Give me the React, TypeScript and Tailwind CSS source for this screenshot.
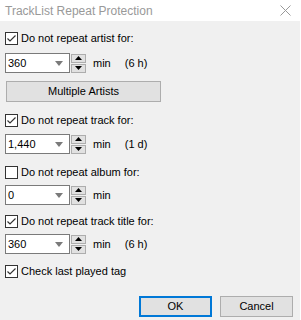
import React from "react";

const font = { fontFamily: '"Liberation Sans", Arial, sans-serif' };

function Check({ checked, label, mt }: { checked: boolean; label: string; mt: string }) {
  return (
    <div className={`flex items-center h-[13px] ${mt}`}>
      <div className="w-[13px] h-[13px] border border-[#333333] bg-white flex items-center justify-center shrink-0">
        {checked && (
          <svg width="11" height="11" viewBox="0 0 11 11">
            <polyline points="1.5,5.5 4,8 9.5,2.5" fill="none" stroke="#333333" strokeWidth="1.2" />
          </svg>
        )}
      </div>
      <span className="ml-[3px] text-[11px] text-black leading-none">{label}</span>
    </div>
  );
}

function Tri({ up, color }: { up?: boolean; color: string }) {
  return (
    <svg width="7" height="4" viewBox="0 0 7 4">
      <polygon points={up ? "0,4 7,4 3.5,0" : "0,0 7,0 3.5,4"} fill={color} />
    </svg>
  );
}

function Combo({ value, extra, mt }: { value: string; extra?: string; mt: string }) {
  return (
    <div className={`flex items-center ${mt}`}>
      <div className="w-[65px] h-[20px] border border-[#7a7a7a] bg-white flex items-center justify-between pl-[2px] pr-[6px]">
        <span className="text-[11px] text-black leading-none">{value}</span>
        <svg width="8" height="5" viewBox="0 0 8 5">
          <polygon points="0,0 8,0 4,5" fill="#7a7a7a" />
        </svg>
      </div>
      <div className="ml-[1px] flex flex-col gap-[1px]">
        <div className="w-[15px] h-[9px] bg-[#e1e1e1] border border-[#adadad] flex items-center justify-center">
          <Tri up color="#000" />
        </div>
        <div className="w-[15px] h-[9px] bg-[#e1e1e1] border border-[#adadad] flex items-center justify-center">
          <Tri color="#000" />
        </div>
      </div>
      <span className="ml-[7px] text-[11px] text-black leading-none">min</span>
      {extra && <span className="ml-[14px] text-[11px] text-black leading-none">{extra}</span>}
    </div>
  );
}

export default function App() {
  return (
    <div className="w-[301px] h-[320px] bg-[#f0f0f0] flex flex-col border-r border-white" style={font}>
      <div className="h-[21px] bg-white flex items-center justify-between pl-[5px] pr-[9px] shrink-0">
        <span className="text-[12px] text-[#999999] leading-none">
          TrackList Repeat Protection
        </span>
        <svg width="11" height="11" viewBox="0 0 11 11">
          <path d="M0.5 0.5 L10.5 10.5 M10.5 0.5 L0.5 10.5" stroke="#999999" strokeWidth="1" />
        </svg>
      </div>
      <div className="flex flex-col pl-[5px]">
        <Check checked label="Do not repeat artist for:" mt="mt-[11px]" />
        <Combo value="360" extra="(6 h)" mt="mt-[8px]" />
        <button className="mt-[8px] ml-[1px] w-[155px] h-[21px] bg-[#e1e1e1] border border-[#adadad] text-[11px] text-black leading-none">
          Multiple Artists
        </button>
        <Check checked label="Do not repeat track for:" mt="mt-[12px]" />
        <Combo value="1,440" extra="(1 d)" mt="mt-[7px]" />
        <Check checked={false} label="Do not repeat album for:" mt="mt-[12px]" />
        <Combo value="0" mt="mt-[6px]" />
        <Check checked label="Do not repeat track title for:" mt="mt-[10px]" />
        <Combo value="360" extra="(6 h)" mt="mt-[6px]" />
        <Check checked label="Check last played tag" mt="mt-[11px]" />
      </div>
      <div className="flex justify-end gap-[8px] pr-[7px] mt-[18px]">
        <button className="w-[73px] h-[21px] bg-[#e1e1e1] border-2 border-[#0078d7] text-[11px] text-black leading-none">
          OK
        </button>
        <button className="w-[73px] h-[21px] bg-[#e1e1e1] border border-[#adadad] text-[11px] text-black leading-none">
          Cancel
        </button>
      </div>
    </div>
  );
}
